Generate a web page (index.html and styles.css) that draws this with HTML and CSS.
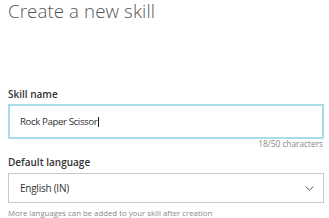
FILE: index.html
```html
<!DOCTYPE html>
<html>
	<head>
		<link rel="stylesheet" href="styles.css">
	</head>
	<body>
		<h1 class="title">Create a new skill</h1>

		<div class="field name-field">
			<label class="label">Skill name</label>
			<div class="input focused">Rock Paper Scissor<span class="caret"></span></div>
			<div class="counter">18/50 characters</div>
		</div>

		<div class="field lang-field">
			<label class="label">Default language</label>
			<div class="input select">
				<span>English (IN)</span>
				<svg class="chevron" width="9" height="5" viewBox="0 0 9 5">
					<path d="M0.5 0.5 L4.5 4.2 L8.5 0.5" fill="none" stroke="#555" stroke-width="1"/>
				</svg>
			</div>
			<div class="hint">More languages can be added to your skill after creation</div>
		</div>
	</body>
</html>
```

FILE: styles.css
```css
* {
	box-sizing: border-box;
}

body {
	margin: 0;
	padding: 0 5px 0 8px;
	background: #fff;
	font-family: "Open Sans", "Noto Sans", sans-serif;
	color: #232f3e;
}

.title {
	margin: 0;
	padding-top: 1px;
	font-size: 18.7px;
	line-height: 19px;
	font-weight: 300;
	color: #555;
	letter-spacing: 0.1px;
}

.field {
	display: flex;
	flex-direction: column;
}

.name-field {
	margin-top: 67px;
}

.lang-field {
	margin-top: 6px;
}

.label {
	font-size: 10px;
	font-weight: 600;
	line-height: 14px;
	color: #333;
	margin-bottom: 3px;
}

.lang-field .label {
	margin-bottom: 4px;
}

.input {
	height: 30px;
	border: 1px solid #c8c8c8;
	padding: 0 11px;
	display: flex;
	align-items: center;
	font-size: 10px;
	letter-spacing: -0.25px;
	color: #333;
}

.focused {
	height: 35px;
	border: 2px solid #aadbe8;
	padding: 0 10px;
	font-size: 9.7px;
	letter-spacing: -0.4px;
}

.caret {
	display: inline-block;
	width: 1px;
	height: 10px;
	margin-left: 1px;
	background: #222;
}

.counter {
	text-align: right;
	font-size: 8.3px;
	line-height: 10px;
	color: #888;
	padding-right: 1px;
}

.select {
	justify-content: space-between;
	padding-right: 9px;
}

.chevron {
	display: block;
}

.hint {
	font-size: 7.8px;
	line-height: 10px;
	color: #888;
	margin-top: 5px;
}
```
